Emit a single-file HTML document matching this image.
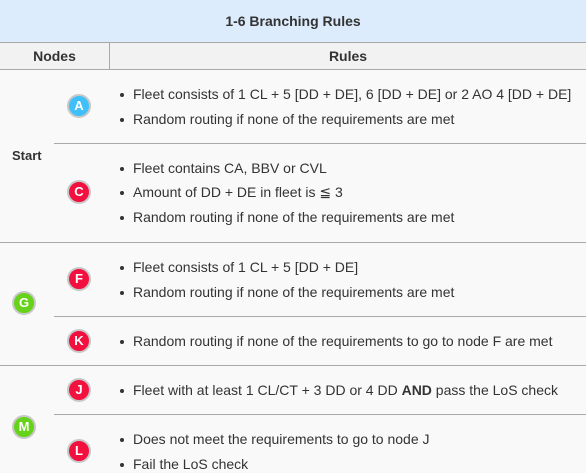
<!DOCTYPE html>
<html><head><meta charset="utf-8"><style>
body{margin:0;width:586px;height:473px;overflow:hidden;background:#f9f9f9;font-family:"Liberation Sans",Arial,sans-serif;color:#333;position:relative}
.a{position:absolute}
.t{white-space:nowrap;font-size:14px;line-height:16px}
.li{position:absolute;left:133px;white-space:nowrap;font-size:14px;line-height:16px;transform:translateY(-8px)}
.li:before{content:"";position:absolute;left:-13px;top:7px;width:4px;height:4px;border-radius:50%;background:#333}
.c{position:absolute;width:20px;height:20px;border-radius:50%;border:2px solid #c8c8c8;color:#fff;font-weight:bold;font-size:13px;line-height:20px;text-align:center;transform:translate(-12px,-12px)}
.b{background:#3fc0fb}.r{background:#f2103f}.g{background:#66d21a}
.hl{position:absolute;height:1px;background:#a9a9a9;right:0}
</style></head><body>
<div class="a" style="left:0;top:0;width:586px;height:42px;background:#dcecfc"></div>
<div class="a t" style="left:0;width:586px;top:13px;text-align:center;font-weight:bold">1-6 Branching Rules</div>
<div class="a" style="left:0;top:42px;width:586px;height:27px;background:#f2f2f2"></div>
<div class="hl" style="left:0;top:42px"></div>
<div class="hl" style="left:0;top:69px"></div>
<div class="a" style="left:109px;top:42px;width:1px;height:27px;background:#a9a9a9"></div>
<div class="a t" style="left:0;width:109px;top:48px;text-align:center;font-weight:bold">Nodes</div>
<div class="a t" style="left:110px;width:476px;top:48px;text-align:center;font-weight:bold">Rules</div>

<div class="hl" style="left:54px;top:143px"></div>
<div class="hl" style="left:0;top:242px"></div>
<div class="hl" style="left:54px;top:316px"></div>
<div class="hl" style="left:0;top:365px"></div>
<div class="hl" style="left:54px;top:414px"></div>

<div class="a t" style="left:12px;top:148px;font-weight:bold;font-size:13px">Start</div>
<div class="c g" style="left:24px;top:303px">G</div>
<div class="c g" style="left:24px;top:427px">M</div>

<div class="c b" style="left:79px;top:106px">A</div>
<div class="c r" style="left:79px;top:192px">C</div>
<div class="c r" style="left:79px;top:279px">F</div>
<div class="c r" style="left:79px;top:341px">K</div>
<div class="c r" style="left:79px;top:390px">J</div>
<div class="c r" style="left:79px;top:451px">L</div>

<div class="li" style="top:94px">Fleet consists of 1 CL + 5 [DD + DE], 6 [DD + DE] or 2 AO 4 [DD + DE]</div>
<div class="li" style="top:119px">Random routing if none of the requirements are met</div>
<div class="li" style="top:168px">Fleet contains CA, BBV or CVL</div>
<div class="li" style="top:192px">Amount of DD + DE in fleet is ≦ 3</div>
<div class="li" style="top:217px">Random routing if none of the requirements are met</div>
<div class="li" style="top:267px">Fleet consists of 1 CL + 5 [DD + DE]</div>
<div class="li" style="top:292px">Random routing if none of the requirements are met</div>
<div class="li" style="top:341px">Random routing if none of the requirements to go to node F are met</div>
<div class="li" style="top:390px">Fleet with at least 1 CL/CT + 3 DD or 4 DD <b>AND</b> pass the LoS check</div>
<div class="li" style="top:439px">Does not meet the requirements to go to node J</div>
<div class="li" style="top:464px">Fail the LoS check</div>
</body></html>
